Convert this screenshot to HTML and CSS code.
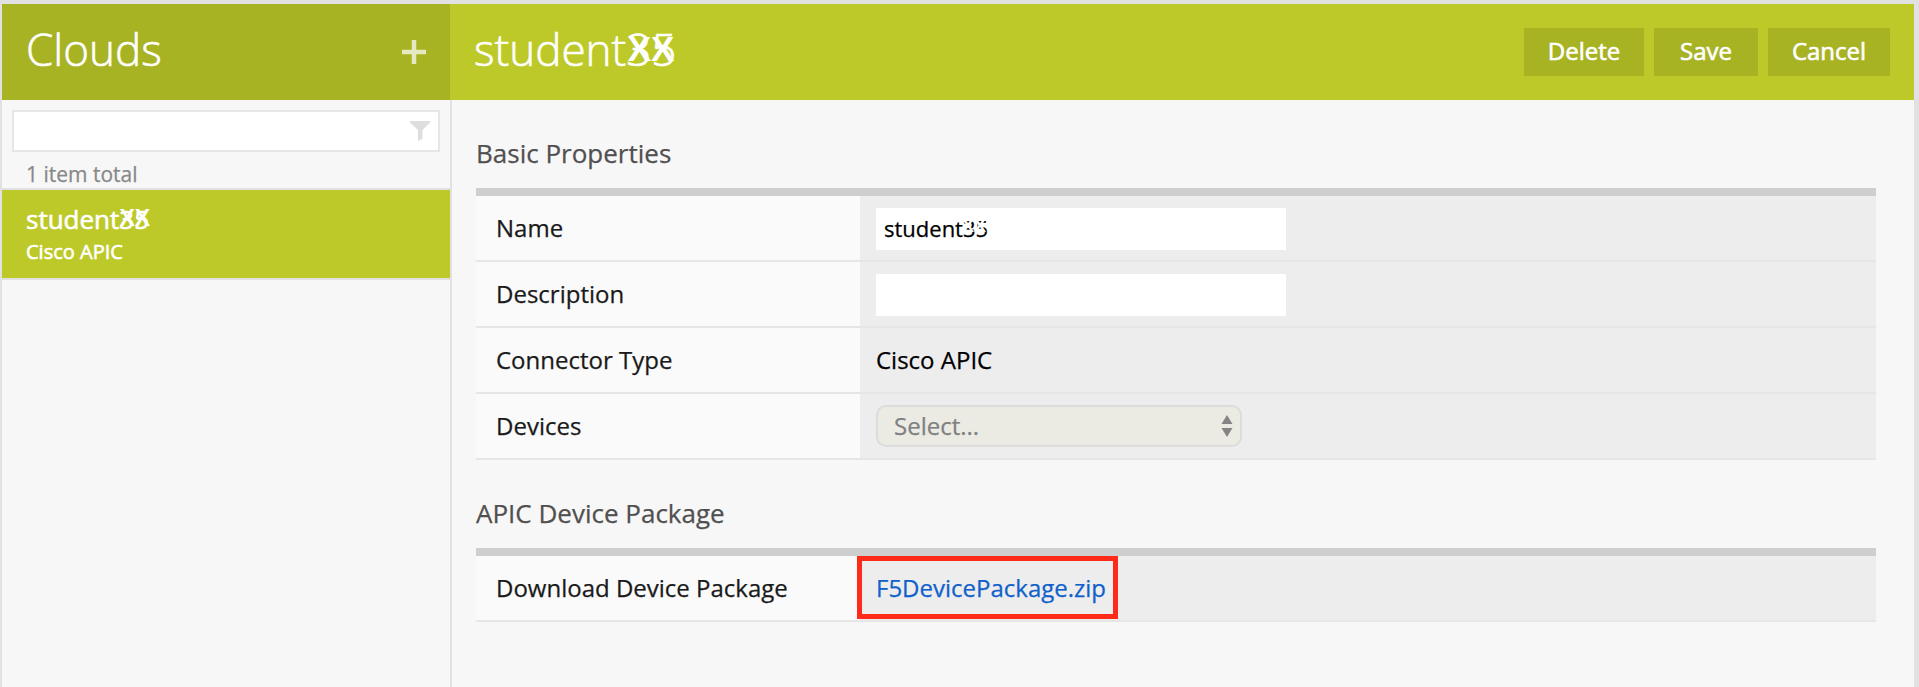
FILE: index.html
```html
<!DOCTYPE html>
<html lang="en">
<head>
<meta charset="utf-8">
<title>Clouds</title>
<link rel="stylesheet" href="styles.css">
</head>
<body>
<div class="app">
  <aside class="sidebar">
    <header class="sidebar-head">
      <h1 class="title">Clouds</h1>
      <svg class="plus" viewBox="0 0 24 24"><path d="M12 0v24M0 12h24" stroke="#e5e8c0" stroke-width="4.500" fill="none"/></svg>
    </header>
    <div class="filter">
      <svg class="funnel" viewBox="0 0 20 20"><path d="M0 0h20v1.500L12.500 9v9L8 20V9L0 1.500z" fill="#dedede"/></svg>
    </div>
    <div class="count">1 item total</div>
    <div class="item">
      <div class="item-name"><span class="marked">student35<span class="mark mark-item">XX</span></span></div>
      <div class="item-type">Cisco APIC</div>
    </div>
  </aside>
  <main class="main">
    <header class="main-head">
      <h1 class="title"><span class="marked">student35<span class="mark mark-title">XX</span></span></h1>
      <div class="actions">
        <div class="btn btn-delete">Delete</div>
        <div class="btn btn-save">Save</div>
        <div class="btn btn-cancel">Cancel</div>
      </div>
    </header>
    <div class="content">
      <h2 class="section-title">Basic Properties</h2>
      <div class="table">
        <div class="row"><div class="label">Name</div><div class="value"><div class="input"><span class="marked">student35<span class="mark mark-input">XX</span></span></div></div></div>
        <div class="row"><div class="label">Description</div><div class="value"><div class="input"></div></div></div>
        <div class="row"><div class="label">Connector Type</div><div class="value">Cisco APIC</div></div>
        <div class="row"><div class="label">Devices</div><div class="value"><div class="select"><span>Select...</span><svg class="arrows" viewBox="0 0 12 22"><path d="M6 0l5.500 9H.5zM.5 13h11L6 22z" fill="#858585"/></svg></div></div></div>
      </div>
      <h2 class="section-title second">APIC Device Package</h2>
      <div class="table">
        <div class="row"><div class="label">Download Device Package</div><div class="value"><a class="link">F5DevicePackage.zip<span class="highlight"></span></a></div></div>
      </div>
    </div>
  </main>
</div>
</body>
</html>
```
FILE: styles.css
```css
* { box-sizing: border-box; }
body { margin: 0; background: #e1e1e1; font-family: "Open Sans", "Noto Sans", sans-serif; font-size: 24px; color: #1a1a1a; -webkit-text-stroke: .25px currentColor; }
.app { display: flex; height: 687px; padding: 4px 5px 0 2px; overflow: hidden; }
.sidebar { width: 450px; flex: none; background: #f7f7f7; border-right: 2px solid #e1e1e1; }
.sidebar-head { display: flex; align-items: center; justify-content: space-between; width: 448px; height: 96px; padding: 0 24px; background: #a8b324; }
.title { margin: 0; padding-bottom: 7px; font-size: 44px; line-height: 60px; font-weight: 300; color: #fff; white-space: nowrap; -webkit-text-stroke: .6px #fff; }
.plus { width: 24px; height: 24px; }
.filter { display: flex; align-items: center; justify-content: flex-end; height: 42px; margin: 10px 10px 0; padding: 0 8px; background: #fff; border: 2px solid #e6e6e6; }
.funnel { width: 20px; height: 20px; }
.count { height: 38px; padding: 6px 24px 0; font-size: 21px; line-height: 32px; color: #888; border-bottom: 2px solid #e1e1e1; }
.item { height: 90px; padding: 12px 24px 0; background: #bdc928; color: #fff; border-bottom: 2px solid #e1e1e1; -webkit-text-stroke: .6px #fff; }
.item-name { font-size: 26px; line-height: 35px; }
.item-type { font-size: 20px; line-height: 30px; }
.main { flex: 1; margin-left: -2px; }
.main-head { display: flex; align-items: center; justify-content: space-between; height: 96px; padding: 0 24px; background: #bdc928; }
.actions { display: flex; gap: 10px; }
.btn { display: flex; align-items: center; justify-content: center; height: 48px; padding-bottom: 4px; background: #a8b324; color: #fff; -webkit-text-stroke: .6px #fff; }
.btn-delete { width: 120px; }
.btn-save { width: 104px; }
.btn-cancel { width: 122px; }
.content { height: 600px; margin-left: 2px; padding: 36px 38px 0 24px; background: #f7f7f7; }
.section-title { margin: 0; height: 52px; font-size: 26px; line-height: 35px; font-weight: 400; color: #505050; }
.second { margin-top: 36px; }
.table { border-top: 8px solid #cecece; }
.row { display: flex; height: 66px; border-bottom: 2px solid #e6e6e6; }
.label, .value { display: flex; align-items: center; }
.label { width: 384px; padding: 0 0 1px 20px; background: #fafafa; }
.value { flex: 1; padding: 0 0 1px 16px; background: #ededed; color: #000; }
.input { display: flex; align-items: center; width: 410px; height: 42px; margin-top: 2px; padding: 0 8px 1px; background: #fff; font-size: 22px; }
.select { display: flex; align-items: center; justify-content: space-between; width: 366px; height: 42px; padding: 0 7px 0 16px; background: #ebebe3; border: 2px solid #dcdcdc; border-radius: 10px; color: #808080; }
.arrows { width: 12px; height: 22px; }
.link { position: relative; color: #1161cc; }
.highlight { position: absolute; left: -19px; top: -15px; width: 261px; height: 63px; border: 5px solid #fe2a1a; }
.marked { position: relative; }
.mark { position: absolute; font-family: "Liberation Sans", Arial, sans-serif; font-weight: 700; color: #fff; -webkit-text-stroke: 0; }
.mark-title { font-size: 35px; line-height: 60px; right: 2px; top: 0; }
.mark-item { font-size: 23px; right: -1px; top: 0; }
.mark-input { font-size: 18px; right: 2px; top: 3px; }
```
